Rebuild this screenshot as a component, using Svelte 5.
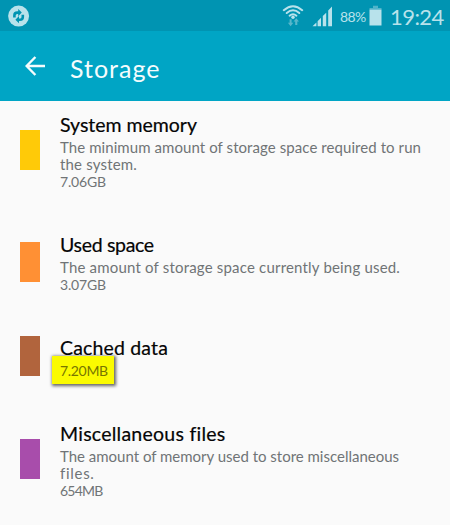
<script>
  const items = [
    { title: 'System memory', width: 137, color: '#ffca08', lines: [
      ['The minimum amount of storage space required to run', 361], ['the system.', 77], ['7.06GB', 46]] },
    { title: 'Used space', width: 94, color: '#ff9034', lines: [
      ['The amount of storage space currently being used.', 340], ['3.07GB', 46]] },
    { title: 'Cached data', width: 108, color: '#b1643d', marked: true, lines: [['7.20MB', 48]] },
    { title: 'Miscellaneous files', width: 165, color: '#a84dab', lines: [
      ['The amount of memory used to store miscellaneous', 339], ['files.', 34], ['654MB', 43]] }
  ];

  // Spreads the letters so that a line takes the given width.
  function fit(node, width) {
    const natural = node.getBoundingClientRect().width;
    node.style.letterSpacing = `${(width - natural) / (node.textContent.length - 0.5)}px`;
  }
</script>

<main>
  <div class="status">
    <svg class="sync" width="22" height="22" viewBox="0 0 22 22">
      <circle cx="10.6" cy="11.1" r="10.5" fill="#b8e2eb" />
      <g fill="none" stroke="#0093b1" stroke-width="2.6">
        <path d="M6.4 12.6V10.4Q6.4 7.6 9.3 7.6H11" />
        <path d="M14.8 9.8V11.9Q14.8 14.7 12 14.7H10.2" />
      </g>
      <path d="M10.2 4L13.8 7.6L10.2 11.2ZM11 11.1L7.4 14.7L11 18.3Z" fill="#0093b1" />
    </svg>
    <div class="right">
      <svg width="22" height="24" viewBox="0 0 22 24">
        <g fill="none" stroke="#b8e2eb" stroke-width="2" stroke-linecap="round">
          <path d="M1.8 6.2Q11 -1.8 20.2 6.2" />
          <path d="M4.7 9Q11 3.6 17.3 9" />
          <path d="M7.6 11.7Q11 8.8 14.4 11.7" />
        </g>
        <circle cx="11" cy="13.2" r="1.7" fill="#b8e2eb" />
        <path d="M7.6 15.3H9.6V18.8H11.3L8.6 22.2L5.9 18.8H7.6ZM13.2 21V17.6H11.5L14.3 14.2L17 17.6H15.3V21Z" fill="#58b7cb" />
      </svg>
      <svg class="signal" width="21" height="21" viewBox="0 0 21 21">
        <path d="M.5 20.2L4.4 16.5V20.2ZM5.6 15.2L9 11.7V20.2H5.6ZM10.8 10L14.2 6.7V20.2H10.8ZM16.2 4.5L20 .4V20.2H16.2Z" fill="#b8e2eb" />
      </svg>
      <span class="pct"><span use:fit={26}>88%</span></span>
      <svg class="battery" width="13" height="21" viewBox="0 0 13 21">
        <path d="M4 .8H9V3H12.5V5H.5V3H4Z" fill="#4fb4ca" />
        <path d="M.5 4.7H12.5V20.5H.5Z" fill="#b8e2eb" />
      </svg>
      <span class="time"><span use:fit={54}>19:24</span></span>
    </div>
  </div>

  <header>
    <svg width="21" height="20" viewBox="0 0 21 20">
      <path d="M20 10H2M10.4 1L1.6 10L10.4 19" fill="none" stroke="#f4fcfd" stroke-width="2.4" />
    </svg>
    <h1><span use:fit={90}>Storage</span></h1>
  </header>

  <ul>
    {#each items as item}
      <li>
        <i style="background: {item.color}"></i>
        <div class="copy">
          <h2><span use:fit={item.width}>{item.title}</span></h2>
          {#each item.lines as [text, width], n}
            <p class:marked={item.marked} class:size={n === item.lines.length - 1}>
              <span use:fit={width}>{text}</span>
            </p>
          {/each}
        </div>
      </li>
    {/each}
  </ul>
</main>

<style>
  main {
    width: 450px;
    height: 525px;
    overflow: hidden;
    background: #fafafa;
    font-family: "Choco cooky", Lato, "Open Sans", sans-serif;
  }
  span, p, h1, h2 { white-space: nowrap; }
  h1, h2, p, ul { margin: 0; padding: 0; font-weight: 400; }
  .status {
    display: flex;
    align-items: flex-start;
    justify-content: space-between;
    height: 31px;
    box-sizing: border-box;
    padding: 4px 6px 0 8px;
    background: #0094b2;
    color: #b8e2eb;
  }
  .sync { margin-top: 1px; }
  .right { display: flex; align-items: flex-start; }
  .signal { margin: 2px 0 0 8px; }
  .pct { width: 26px; margin: 3px 3px 0 7px; font-size: 14px; line-height: 20px; }
  .battery { margin-top: 1px; }
  .time { width: 54px; margin-left: 8px; font-size: 22px; line-height: 26px; }
  header {
    display: flex;
    align-items: center;
    height: 70px;
    box-sizing: border-box;
    padding: 0 0 0 25px;
    background: #00a5c5;
    color: #f4fcfd;
  }
  h1 { margin: 3px 0 0 24px; font-size: 25px; line-height: 30px; }
  ul {
    display: flex;
    flex-direction: column;
    gap: 43px;
    padding: 12px 20px 0;
    list-style: none;
  }
  li { display: flex; align-items: center; gap: 20px; }
  i { flex: none; width: 20px; height: 40px; margin-bottom: 3px; }
  h2 { height: 26px; font-size: 19.5px; line-height: 23px; color: #050505; -webkit-text-stroke: 0.2px; }
  p { height: 17px; font-size: 15px; line-height: 17px; color: #707476; }
  .size { font-size: 14px; }
  .marked {
    position: relative;
    z-index: 0;
    color: #777600;
  }
  .marked::before {
    content: "";
    position: absolute;
    z-index: -1;
    left: -8px;
    top: -6px;
    width: 62px;
    height: 28px;
    background: #fbfb00;
    box-shadow: 1px 1px 3px 1px #0009;
  }
</style>
